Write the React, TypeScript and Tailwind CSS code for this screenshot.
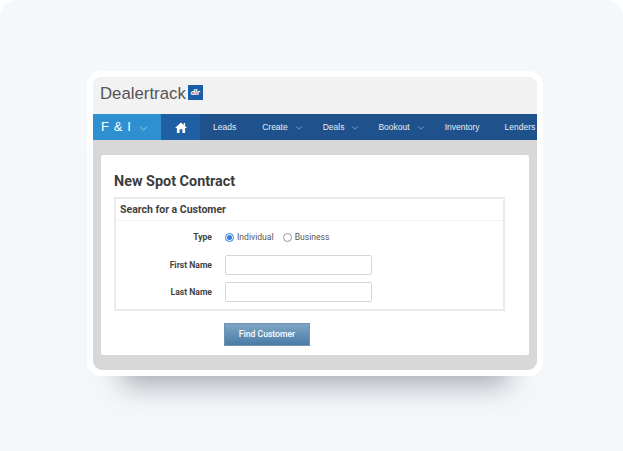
import React from 'react';
import { ChevronDown } from 'lucide-react';

const navItems = [
  { label: 'Leads', gap: 'pr-[26px]', chevron: false },
  { label: 'Create', gap: 'pr-[19px]', chevron: true },
  { label: 'Deals', gap: 'pr-[18px]', chevron: true },
  { label: 'Bookout', gap: 'pr-[19px]', chevron: true },
  { label: 'Inventory', gap: 'pr-[25px]', chevron: false },
  { label: 'Lenders', gap: 'pr-0', chevron: false },
];

const Field: React.FC<{ label: string }> = ({ label }) => (
  <div className="flex items-center h-[20px]">
    <label className="w-[96px] text-right text-[8.6px] font-bold text-[#444]">{label}</label>
    <input type="text" className="ml-[13px] w-[147px] h-[20px] bg-white border border-[#d6d6d6] rounded-[2px]" />
  </div>
);

const App: React.FC = () => {
  return (
    <div className="w-[623px] h-[451px] bg-white overflow-hidden font-['Roboto',sans-serif]">
      <div className="w-full h-full bg-[#f4f8fb] rounded-t-[16px] pt-[71px] pl-[87px]">
        <div className="w-[456px] h-[305px] bg-white rounded-[14px] p-[6px] shadow-[0_44px_26px_-35px_rgba(90,95,105,0.5)]">
          <div className="w-[444px] h-[293px] rounded-[9px] overflow-hidden bg-[#d8d8d8] flex flex-col">
            <header className="h-[37px] bg-[#f2f2f2] flex items-center pl-[7px] pb-[2px] shrink-0">
              <span className="font-['Liberation_Sans',sans-serif] text-[16.8px] leading-none text-[#555]">Dealertrack</span>
              <span className="ml-[2px] -mt-[4px] w-[15px] h-[15px] bg-[#1a5ea8] flex items-center justify-center text-white italic font-bold text-[8px] leading-none">
                dlr
              </span>
            </header>
            <nav className="h-[26px] bg-[#1f528c] flex items-stretch shrink-0 overflow-hidden">
              <div className="w-[68px] shrink-0 bg-[#2e8fd1] flex items-center pl-[8px] text-white">
                <span className="font-['Liberation_Sans',sans-serif] text-[13px] tracking-[0.6px] whitespace-nowrap">F &amp; I</span>
                <ChevronDown className="ml-[6px] mt-[3px] text-[#cfe6f6]" size={13} strokeWidth={1.2} />
              </div>
              <div className="w-[39px] shrink-0 bg-[#1f5fa3] flex items-center justify-center">
                <svg width="12" height="11" viewBox="0 0 13 12">
                  <path d="M6.5 0.5 L9.5 3.3 V1 H11 V4.7 L13 6.5 H11 V12 H8 V8 H5 V12 H2 V6.5 H0 Z" fill="#ffffff" />
                </svg>
              </div>
              <div className="flex items-center pl-[13px] pt-[1px] font-['Liberation_Sans',sans-serif] text-[8.5px] text-[#e6edf5]">
                {navItems.map((item) => (
                  <div key={item.label} className={`${item.gap} shrink-0 flex items-center whitespace-nowrap`}>
                    <span>{item.label}</span>
                    {item.chevron && <ChevronDown className="ml-[6px] text-[#dbe5f0]" size={10} strokeWidth={1.2} />}
                  </div>
                ))}
              </div>
            </nav>
            <div className="flex-1 pt-[15px] px-[8px] pb-[15px]">
              <main className="h-[200px] bg-white rounded-[2px] pt-[19px] pl-[13px] pr-[24px]">
                <h1 className="text-[14.4px] leading-[16px] font-bold text-[#3c3c3c]">New Spot Contract</h1>
                <section className="mt-[7px] h-[114px] border-2 border-[#ebebeb]">
                  <h2 className="h-[22px] pl-[4px] flex items-center text-[10.5px] font-bold text-[#3f3f3f] border-b border-[#f2f2f2]">Search for a Customer</h2>
                  <div className="pt-[8px] flex flex-col gap-[7px]">
                    <div className="flex items-center h-[16px] mb-[3px]">
                      <span className="w-[96px] text-right text-[8.6px] font-bold text-[#444]">Type</span>
                      <span className="ml-[13px] w-[9px] h-[9px] rounded-full border border-[#2f7fd6] flex items-center justify-center">
                        <span className="w-[5px] h-[5px] rounded-full bg-[#2f7fd6]" />
                      </span>
                      <span className="ml-[3px] text-[8.6px] text-[#555]">Individual</span>
                      <span className="ml-[9px] w-[9px] h-[9px] rounded-full border border-[#999]" />
                      <span className="ml-[3px] text-[8.6px] text-[#555]">Business</span>
                    </div>
                    <Field label="First Name" />
                    <Field label="Last Name" />
                  </div>
                </section>
                <button className="mt-[12px] ml-[110px] w-[86px] h-[23px] bg-gradient-to-b from-[#7fa5c4] to-[#4a7ca6] border border-[#6f94b3] text-white text-[8.6px] font-medium">
                  Find Customer
                </button>
              </main>
            </div>
          </div>
        </div>
      </div>
    </div>
  );
};

export default App;
